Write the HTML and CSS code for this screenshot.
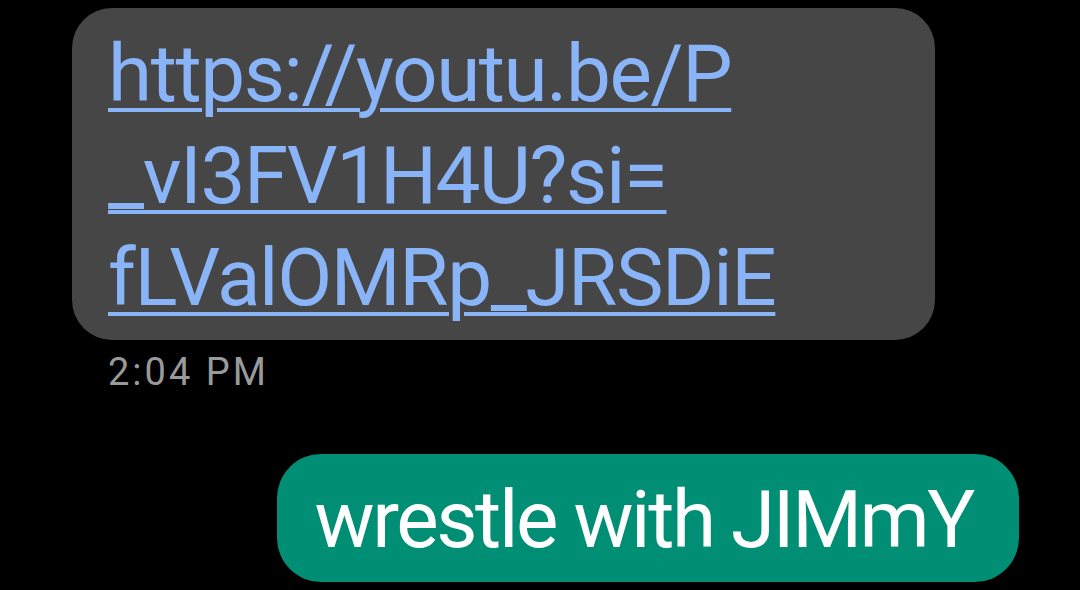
FILE: index.html
```html
<!DOCTYPE html>
<html>
  <head lang="en">
    <meta charset="UTF-8" />
    <title>Messages</title>
    <link rel="stylesheet" href="styles.css">
  </head>

  <body>
    <div class="thread">
      <div class="msg in">
        <div class="bubble">
          <a class="link" href="#">https://youtu.be/P<br />_vI3FV1H4U?si=<br />fLValOMRp_JRSDiE</a>
        </div>
        <div class="time">2:04 PM</div>
      </div>
      <div class="msg out">
        <div class="bubble">wrestle with JIMmY</div>
      </div>
    </div>
  </body>
</html>
```

FILE: styles.css
```css
html,
body {
  margin: 0;
  padding: 0;
  background: #000000;
}

body {
  font-family: Roboto, "Noto Sans", "Liberation Sans", sans-serif;
  width: 1080px;
  height: 590px;
  overflow: hidden;
}

.thread {
  display: flex;
  flex-direction: column;
  padding: 8px 61px 0 72px;
}

.msg {
  display: flex;
  flex-direction: column;
}

.msg.in {
  align-items: flex-start;
}

.msg.out {
  align-items: flex-end;
  margin-top: 60px;
}

.msg.in .bubble {
  width: 863px;
  box-sizing: border-box;
  background: #464646;
  border-radius: 40px;
  padding: 15px 36px 11px 36px;
  font-size: 80px;
  line-height: 102px;
  letter-spacing: -1.4px;
}

.link {
  color: #8ab4f8;
  text-decoration: underline;
  text-decoration-thickness: 4px;
  text-underline-offset: 7px;
}

.time {
  margin: 10px 0 0 36px;
  font-size: 38px;
  line-height: 44px;
  letter-spacing: 3px;
  color: #9a9a9a;
}

.msg.out .bubble {
  background: #008f74;
  color: #ffffff;
  border-radius: 44px;
  padding: 18px 46px 14px 38px;
  font-size: 80px;
  line-height: 96px;
  letter-spacing: -2.4px;
  white-space: nowrap;
}
```
